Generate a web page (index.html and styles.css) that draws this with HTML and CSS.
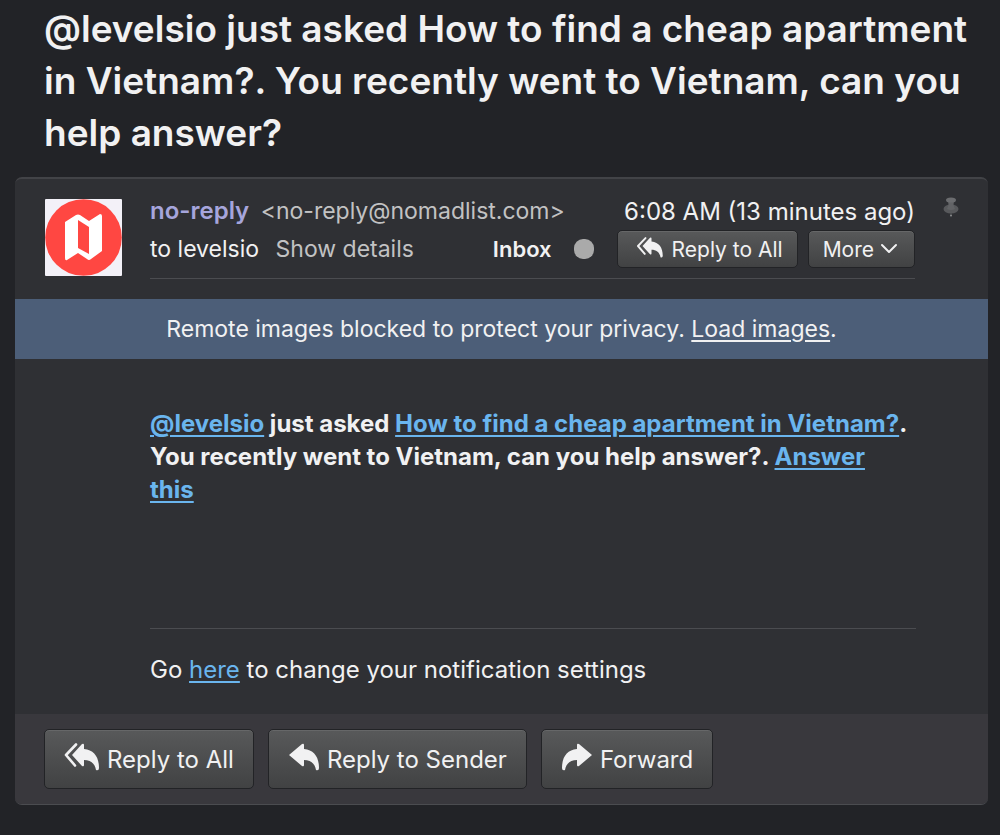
FILE: index.html
```html
<!DOCTYPE html>
<html lang="en">
    <head>
        <meta charset="utf-8">
        <title>Mail</title>
        <link rel="stylesheet" href="styles.css">
    </head>
    <body>
        <svg class="symbols" aria-hidden="true">
            <symbol id="reply" viewBox="0 0 32 28">
                <path d="M1 12 L14 1 Q16 0 16 2 V6 C26 7 31 14 31 25 Q31 28 28 27 C27 21 23 17 16 17 V22 Q16 24 14 23 Z"/>
            </symbol>
            <symbol id="reply-all" viewBox="0 0 36 28">
                <path d="M8 12 L18 1 Q20 0 20 2 V6 C30 7 35 14 35 25 Q35 28 32 27 C31 21 27 17 20 17 V22 Q20 24 18 23 Z"/>
                <path d="M12 1.500 L2 12 L11 22.500" fill="none" stroke="currentColor" stroke-width="2.600" stroke-linecap="round" stroke-linejoin="round"/>
            </symbol>
        </svg>
        <h1 class="subject">@levelsio just asked How to find a cheap apartment in Vietnam?. You recently went to Vietnam, can you help answer?</h1>
        <main class="message">
            <header class="header">
                <svg class="avatar" viewBox="0 0 77 77" role="img" aria-label="Nomad List">
                    <rect width="77" height="77" rx="1" fill="#f3f1f8"/>
                    <circle cx="38.500" cy="38.500" r="38.300" fill="#ff4742"/>
                    <path d="M20 23 L31 16 Q33 15 35 16 L44 22 L55 15 Q57 15 57 17 V52 L46 60 Q44 62 42 60 L33 54 L22 61 Q20 62 20 59 Z" fill="#fff"/>
                    <path d="M33 21 L44 28 V55 L33 49 Z" fill="#ff4742"/>
                </svg>
                <div class="info">
                    <div class="row">
                        <div class="from"><b class="sender">no-reply</b> <span class="address">&lt;no-reply@nomadlist.com&gt;</span></div>
                        <time class="date">6:08 AM (13 minutes ago)</time>
                    </div>
                    <div class="row">
                        <div class="to">to levelsio <a class="details" href="#">Show details</a></div>
                        <div class="actions">
                            <b class="label">Inbox</b>
                            <span class="dot"></span>
                            <button class="button small" type="button"><svg class="icon" viewBox="0 0 36 28"><use href="#reply-all"/></svg>Reply to All</button>
                            <button class="button small more" type="button">More<svg class="chevron" viewBox="0 0 18 12"><path d="M2 2 L9 9 L16 2"/></svg></button>
                        </div>
                    </div>
                </div>
                <button class="pin" type="button" aria-label="Pin">
                    <svg viewBox="0 0 16 22">
                        <path d="M7 15 H9 L8 21 Z" fill="#444549"/>
                        <ellipse cx="8" cy="12" rx="7.500" ry="4.500" fill="#58595c"/>
                        <path d="M5 3 H11 L10.500 8 L12 12 Q8 14 4 12 L5.500 8 Z" fill="#626366"/>
                        <ellipse cx="8" cy="3" rx="5" ry="2.600" fill="#6b6c6f"/>
                        <circle cx="8" cy="18.500" r="1" fill="#8b8c8e"/>
                    </svg>
                </button>
            </header>
            <div class="privacy">Remote images blocked to protect your privacy. <a href="#">Load images</a>.</div>
            <div class="body">
                <p class="text"><a href="#">@levelsio</a> just asked <a href="#">How to find a cheap apartment in Vietnam?</a>. You recently went to Vietnam, can you help answer?. <a href="#">Answer this</a></p>
                <p class="settings">Go <a href="#">here</a> to change your notification settings</p>
            </div>
            <footer class="footer">
                <button class="button" type="button"><svg class="icon" viewBox="0 0 36 28"><use href="#reply-all"/></svg>Reply to All</button>
                <button class="button" type="button"><svg class="icon single" viewBox="0 0 32 28"><use href="#reply"/></svg>Reply to Sender</button>
                <button class="button" type="button"><svg class="icon single forward" viewBox="0 0 32 28"><use href="#reply"/></svg>Forward</button>
            </footer>
        </main>
    </body>
</html>
```

FILE: styles.css
```css
*{box-sizing:border-box;}
body{margin:0; padding:3px 12px 30px 15px; background:#222327; color:#f1f1f2; font-family:Inter, "Liberation Sans", sans-serif; font-size:24px; line-height:33px;}
.symbols{display:none;}
.subject{margin:0; padding:0 0 0 29px; font-size:37px; font-weight:600; line-height:52px;}
.message{margin-top:18px; border-top:2px solid #424347; border-bottom:1px solid #4b4c50; border-radius:7px; background:#2f3034; overflow:hidden;}
.header{display:flex; align-items:flex-start; padding:20px 29px 20px 30px;}
.avatar{width:77px; height:77px; flex:none;}
.info{flex:1; margin-left:28px; border-bottom:1px solid #4b4c50; padding-bottom:10px;}
.row{display:flex; justify-content:space-between; align-items:center; white-space:nowrap; height:38px;}
.row:first-child{height:31px; padding-bottom:7px;}
.from,.to{font-size:23px;}
.sender{font-size:24px; font-weight:600; color:#a6a5dc; margin-right:5px;}
.address,.details{color:#c2c2c3;}
.details{text-decoration:none; margin-left:10px;}
.actions{display:flex; align-items:center;}
.label{font-size:22px; font-weight:600;}
.dot{width:20px; height:20px; border-radius:9px; background:#aaa; margin:0 23px 0 22px;}
.button{display:flex; align-items:center; height:60px; padding:0 19px; border:1px solid #222326; border-radius:5px; background:linear-gradient(#58595a,#414243); box-shadow:inset 0 1px #666768; color:#f1f1f2; font-family:inherit; font-size:24px;}
.small{height:38px; padding:0 14px 0 18px; font-size:21px;}
.more{margin-left:10px; padding:0 16px 0 14px;}
.icon{width:36px; height:28px; margin-right:7px; margin-bottom:5px; fill:currentColor;}
.small .icon{width:28px; height:21px; margin-right:8px; margin-bottom:3px;}
.single{width:32px;}
.forward{transform:scaleX(-1);}
.chevron{width:18px; height:12px; margin-left:6px; fill:none; stroke:currentColor; stroke-width:2; stroke-linecap:round; stroke-linejoin:round;}
.pin{border:0; padding:0; margin:-2px 0 0 28px; background:none; width:16px; height:22px;}
.pin svg{display:block;}
.privacy{background:#4c5e78; height:60px; display:flex; align-items:center; justify-content:center; white-space:pre; font-size:23px;}
.privacy a{color:inherit;}
.body{padding:48px 72px 28px 135px;}
.text{margin:0; padding-right:4px; font-weight:700; height:222px; border-bottom:1px solid #4b4c50;}
.body a{color:#6ab5ee;}
.settings{margin:0; padding-top:24px;}
.footer{display:flex; gap:14px; padding:15px 29px; background:#39383d;}
a{text-decoration-thickness:2px; text-underline-offset:3px;}
```
